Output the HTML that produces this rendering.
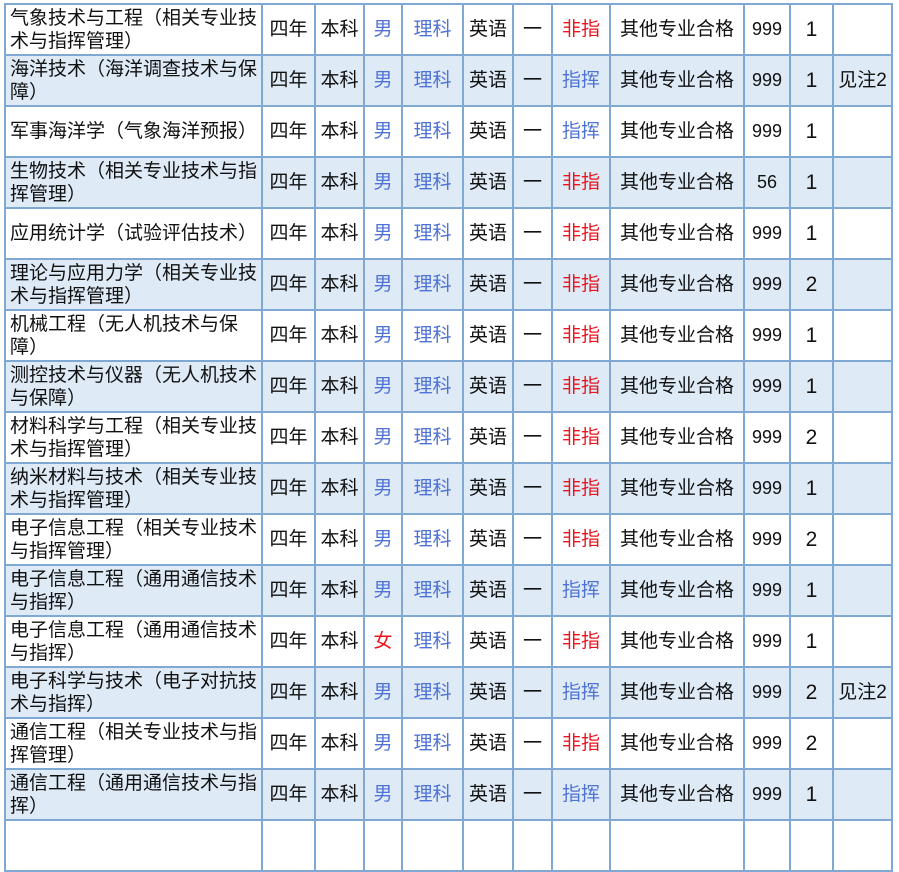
<!DOCTYPE html>
<html><head><meta charset="utf-8"><style>
body{margin:0;width:899px;height:825px;overflow:hidden;background:#fff;font-family:"Liberation Sans","Noto Sans CJK SC",sans-serif;}
table{position:absolute;left:4px;top:3px;border-collapse:collapse;table-layout:fixed;}
td{border:2px solid #7fa8d2;height:49px;padding:0;text-align:center;font-size:19px;color:#111;line-height:23px;overflow:hidden;}
tr:nth-child(even) td{background:#deeaf6;}
td.n{text-align:left;padding-left:4px;font-size:19px;}
.b{color:#4f72d6}.r{color:#e8141e}
td.k{font-size:21px}
td.c{font-size:18px}
</style></head><body>
<table>
<colgroup><col style="width:257px"><col style="width:53px"><col style="width:49px"><col style="width:38px"><col style="width:61px"><col style="width:50px"><col style="width:39px"><col style="width:58px"><col style="width:134px"><col style="width:46px"><col style="width:43px"><col style="width:59px"></colgroup>
<tr><td class="n">气象技术与工程（相关专业技术与指挥管理）</td><td>四年</td><td>本科</td><td class="b">男</td><td class="b">理科</td><td>英语</td><td>一</td><td class="r">非指</td><td>其他专业合格</td><td class="c">999</td><td class="k">1</td><td></td></tr>
<tr><td class="n">海洋技术（海洋调查技术与保障）</td><td>四年</td><td>本科</td><td class="b">男</td><td class="b">理科</td><td>英语</td><td>一</td><td class="b">指挥</td><td>其他专业合格</td><td class="c">999</td><td class="k">1</td><td>见注2</td></tr>
<tr><td class="n">军事海洋学（气象海洋预报）</td><td>四年</td><td>本科</td><td class="b">男</td><td class="b">理科</td><td>英语</td><td>一</td><td class="b">指挥</td><td>其他专业合格</td><td class="c">999</td><td class="k">1</td><td></td></tr>
<tr><td class="n">生物技术（相关专业技术与指挥管理）</td><td>四年</td><td>本科</td><td class="b">男</td><td class="b">理科</td><td>英语</td><td>一</td><td class="r">非指</td><td>其他专业合格</td><td class="c">56</td><td class="k">1</td><td></td></tr>
<tr><td class="n">应用统计学（试验评估技术）</td><td>四年</td><td>本科</td><td class="b">男</td><td class="b">理科</td><td>英语</td><td>一</td><td class="r">非指</td><td>其他专业合格</td><td class="c">999</td><td class="k">1</td><td></td></tr>
<tr><td class="n">理论与应用力学（相关专业技术与指挥管理）</td><td>四年</td><td>本科</td><td class="b">男</td><td class="b">理科</td><td>英语</td><td>一</td><td class="r">非指</td><td>其他专业合格</td><td class="c">999</td><td class="k">2</td><td></td></tr>
<tr><td class="n">机械工程（无人机技术与保<br>障）</td><td>四年</td><td>本科</td><td class="b">男</td><td class="b">理科</td><td>英语</td><td>一</td><td class="r">非指</td><td>其他专业合格</td><td class="c">999</td><td class="k">1</td><td></td></tr>
<tr><td class="n">测控技术与仪器（无人机技术与保障）</td><td>四年</td><td>本科</td><td class="b">男</td><td class="b">理科</td><td>英语</td><td>一</td><td class="r">非指</td><td>其他专业合格</td><td class="c">999</td><td class="k">1</td><td></td></tr>
<tr><td class="n">材料科学与工程（相关专业技术与指挥管理）</td><td>四年</td><td>本科</td><td class="b">男</td><td class="b">理科</td><td>英语</td><td>一</td><td class="r">非指</td><td>其他专业合格</td><td class="c">999</td><td class="k">2</td><td></td></tr>
<tr><td class="n">纳米材料与技术（相关专业技术与指挥管理）</td><td>四年</td><td>本科</td><td class="b">男</td><td class="b">理科</td><td>英语</td><td>一</td><td class="r">非指</td><td>其他专业合格</td><td class="c">999</td><td class="k">1</td><td></td></tr>
<tr><td class="n">电子信息工程（相关专业技术与指挥管理）</td><td>四年</td><td>本科</td><td class="b">男</td><td class="b">理科</td><td>英语</td><td>一</td><td class="r">非指</td><td>其他专业合格</td><td class="c">999</td><td class="k">2</td><td></td></tr>
<tr><td class="n">电子信息工程（通用通信技术与指挥）</td><td>四年</td><td>本科</td><td class="b">男</td><td class="b">理科</td><td>英语</td><td>一</td><td class="b">指挥</td><td>其他专业合格</td><td class="c">999</td><td class="k">1</td><td></td></tr>
<tr><td class="n">电子信息工程（通用通信技术与指挥）</td><td>四年</td><td>本科</td><td class="r">女</td><td class="b">理科</td><td>英语</td><td>一</td><td class="r">非指</td><td>其他专业合格</td><td class="c">999</td><td class="k">1</td><td></td></tr>
<tr><td class="n">电子科学与技术（电子对抗技术与指挥）</td><td>四年</td><td>本科</td><td class="b">男</td><td class="b">理科</td><td>英语</td><td>一</td><td class="b">指挥</td><td>其他专业合格</td><td class="c">999</td><td class="k">2</td><td>见注2</td></tr>
<tr><td class="n">通信工程（相关专业技术与指挥管理）</td><td>四年</td><td>本科</td><td class="b">男</td><td class="b">理科</td><td>英语</td><td>一</td><td class="r">非指</td><td>其他专业合格</td><td class="c">999</td><td class="k">2</td><td></td></tr>
<tr><td class="n">通信工程（通用通信技术与指挥）</td><td>四年</td><td>本科</td><td class="b">男</td><td class="b">理科</td><td>英语</td><td>一</td><td class="b">指挥</td><td>其他专业合格</td><td class="c">999</td><td class="k">1</td><td></td></tr>
<tr><td class="n">&nbsp;</td><td></td><td></td><td></td><td></td><td></td><td></td><td></td><td></td><td></td><td></td><td></td></tr>
</table>
</body></html>
